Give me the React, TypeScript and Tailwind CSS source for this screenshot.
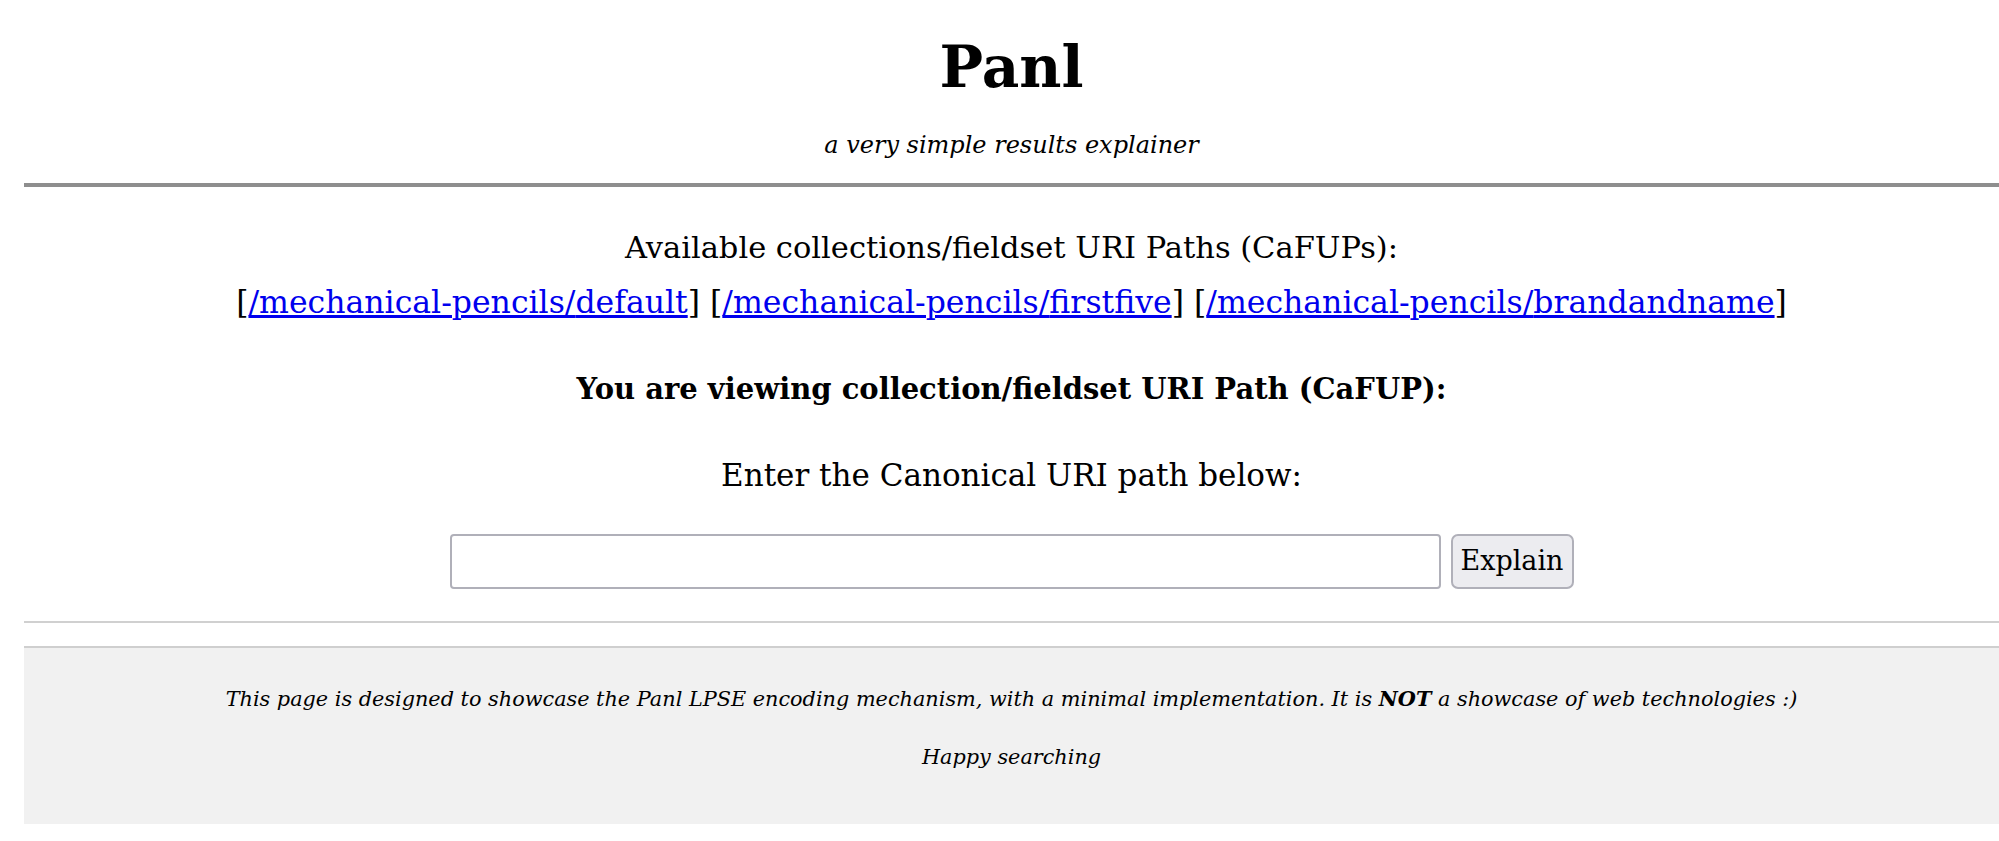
export default function App() {
  const paths = ["default", "firstfive", "brandandname"];
  return (
    <div className="min-h-[841px] bg-white pl-[24px] text-black font-['DejaVu_Serif',serif]">
      <header className="text-center">
        <h1 className="pt-[27px] text-[58px] leading-[80px] font-bold">Panl</h1>
        <p className="mt-[23px] text-[24px] leading-[30px] italic">a very simple results explainer</p>
      </header>
      <div className="mt-[23px] h-[4px] bg-[#8e8e8e]" />

      <main className="text-center">
        <p className="mt-[34px] text-[30.5px] leading-[54px]">
          Available collections/fieldset URI Paths (CaFUPs):
          <br />
          <span className="text-[31.5px]">
            {paths.map((p, i) => (
              <span key={p}>
                [<a href="#" className="text-[#0000ee] underline">/mechanical-pencils/{p}</a>]
                {i < paths.length - 1 ? " " : ""}
              </span>
            ))}
          </span>
        </p>
        <h3 className="mt-[39px] text-[29px] leading-[40px] font-bold">
          You are viewing collection/fieldset URI Path (CaFUP):
        </h3>
        <p className="mt-[48px] text-[31px] leading-[36px]">Enter the Canonical URI path below:</p>
        <div className="mt-[41px] flex justify-center gap-[10px]">
          <input
            type="text"
            className="h-[55px] w-[991px] rounded-[4px] border-2 border-[#b0b0b9] bg-white px-2"
          />
          <button className="h-[55px] w-[123px] rounded-[7px] border-2 border-[#b0b0b9] bg-[#ececf0] text-[27px]">
            Explain
          </button>
        </div>
      </main>

      <div className="mt-[32px] h-[2px] bg-[#d0d0d0]" />

      <footer className="mt-[23px] border-t-2 border-[#cfcfcf] bg-[#f1f1f1] pt-[36px] pb-[52px] text-center text-[20.8px] leading-[30px] italic">
        <p>
          This page is designed to showcase the Panl LPSE encoding mechanism, with a minimal implementation. It is{" "}
          <b>NOT</b> a showcase of web technologies :)
        </p>
        <p className="mt-[28px]">Happy searching</p>
      </footer>
    </div>
  );
}
